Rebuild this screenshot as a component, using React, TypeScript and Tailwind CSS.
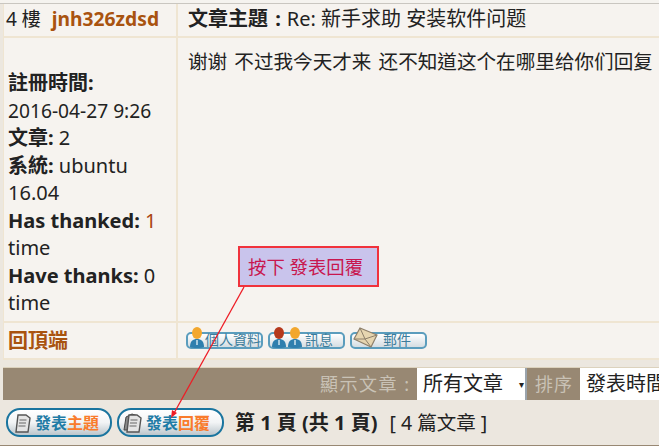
const font = { fontFamily: '"Noto Sans", "Noto Sans CJK TC", "Noto Sans CJK SC", sans-serif' };

function Person({ head, body }: { head: string; body: string }) {
  return (
    <svg width="16" height="21" viewBox="0 0 16 21" className="shrink-0">
      <ellipse cx="8" cy="6" rx="5" ry="6" fill={head} />
      <path d="M1 20c0-6 3-8 7-8s7 2 7 8c-2 .7-4 1-7 1s-5-.3-7-1z" fill={body} />
      <path d="M8 13v5" stroke="#cfe3ee" strokeWidth="1.5" />
    </svg>
  );
}

function Envelope() {
  return (
    <svg width="25" height="21" viewBox="0 0 25 21" className="shrink-0">
      <path d="M7 1 24 8 18 20 1 12z" fill="#e6d5b0" stroke="#8d7f6a" strokeWidth="1.2" />
      <path d="M7 1 12 12 24 8M1 12l11 0M18 20l-6-8" fill="none" stroke="#8d7f6a" strokeWidth="1" />
    </svg>
  );
}

function SmallButton({ icon, label, labelLeft }: { icon: React.ReactNode; label: string; labelLeft: string }) {
  return (
    <div className="relative h-[17px] w-[77px] rounded-[5px] border-2 border-[#5b9dbd] bg-gradient-to-b from-white to-[#d5dde2]">
      <div className="absolute bottom-[-1px] left-[1px] flex items-end">{icon}</div>
      <span className={`absolute top-[-3px] whitespace-nowrap text-[14px] leading-[17px] text-[#3d7d9c] ${labelLeft}`}>
        {label}
      </span>
    </div>
  );
}

function PostIcon({ double }: { double?: boolean }) {
  return (
    <svg width="20" height="22" viewBox="0 0 20 22" className="shrink-0">
      {double && <path d="M3 5 9 2l6 2-3 14H1z" fill="#8a8a8a" stroke="#444" strokeWidth="1" />}
      <path d="M6 3h8l4 3-2 14H4z" fill="#e4e4e4" stroke="#555" strokeWidth="1.4" />
      <path d="M7.5 8h7M7 11h7M6.5 14h7" stroke="#666" strokeWidth="1.2" />
    </svg>
  );
}

function ReplyButton({ first, second, double, width }: { first: string; second: string; double?: boolean; width: string }) {
  return (
    <div
      className={`flex h-[29px] items-center rounded-[14px] border-2 border-[#1a759f] bg-gradient-to-b from-white via-[#f2f4f5] to-[#bcc6cc] pl-[4px] ${width}`}
    >
      <PostIcon double={double} />
      <span className="ml-[3px] text-[16px] leading-none font-bold text-[#1f7ca6]">{first}</span>
      <span className="text-[16px] leading-none font-bold text-[#f97b2b]">{second}</span>
    </div>
  );
}

export default function App() {
  return (
    <div className="relative h-[446px] w-[659px] overflow-hidden bg-[#ece7df] text-[20px] text-[#222]" style={font}>
      <div className="h-[3px] bg-[#f5f3ef]" />
      <div className="h-px bg-[#c9c6c0]" />

      {/* post table */}
      <div className="ml-[3px] border-l border-[#efe5d2] bg-[#f6f3ef]">
        <div className="flex h-[34px] border-b-2 border-[#efe5d2]">
          <div className="flex w-[174px] shrink-0 items-center border-r-2 border-[#efe5d2] pb-[2px] pl-[2px] leading-none">
            <span className="whitespace-nowrap text-[19px]">4 樓</span>
            <span className="ml-[11px] text-[19.25px] font-bold text-[#a9530f]">jnh326zdsd</span>
          </div>
          <div className="flex items-center whitespace-nowrap pb-[2px] pl-[10px] leading-none">
            <b className="[word-spacing:2px]">文章主題 :</b>
            <span className="ml-[6px]">Re: 新手求助 安装软件问题</span>
          </div>
        </div>

        <div className="flex h-[285px] border-b-2 border-[#efe5d2]">
          <div className="w-[174px] shrink-0 border-r-2 border-[#efe5d2] pt-[31px] pl-[4px] leading-[27.5px]">
            <div>
              <b>註冊時間:</b>
            </div>
            <div className="whitespace-nowrap text-[19.2px]">2016-04-27 9:26</div>
            <div>
              <b>文章:</b> 2
            </div>
            <div>
              <b>系統:</b> ubuntu
            </div>
            <div>16.04</div>
            <div>
              <b>Has thanked:</b> <span className="text-[#a9430f]">1</span>
            </div>
            <div>time</div>
            <div>
              <b>Have thanks:</b> 0
            </div>
            <div>time</div>
          </div>
          <div className="whitespace-nowrap pt-[10px] pl-[10px] text-[19.6px] leading-[27px] [word-spacing:2px]">谢谢 不过我今天才来 还不知道这个在哪里给你们回复</div>
        </div>

        <div className="flex h-[37px] border-b-2 border-[#efe5d2]">
          <div className="flex w-[174px] shrink-0 items-center border-r-2 border-[#efe5d2] pl-[4px] font-bold text-[#a9530f]">
            回頂端
          </div>
          <div className="flex items-center gap-[5px] pl-[8px]">
            <SmallButton labelLeft="left-[17px]" label="個人資料" icon={<Person head="#f2a72e" body="#2f7fae" />} />
            <SmallButton
              labelLeft="left-[35px]"
              label="訊息"
              icon={
                <>
                  <Person head="#b5391c" body="#2f7fae" />
                  <Person head="#f2a72e" body="#2f7fae" />
                </>
              }
            />
            <SmallButton labelLeft="left-[31px]" label="郵件" icon={<Envelope />} />
          </div>
        </div>
      </div>

      {/* sort bar */}
      <div className="mt-[7px] ml-[3px] h-[33px] border-t border-[#dcd2bd] bg-[#988873] pl-[317px]">
        <div className="flex h-full items-center whitespace-nowrap text-[#c9c2b6]">
          <span className="w-[97px] shrink-0 text-[18px] tracking-[1.5px]">顯示文章 :</span>
          <div className="relative flex h-full w-[110px] shrink-0 items-center bg-white pl-[6px] text-[#222]">
            所有文章
            <span className="absolute right-[3px] text-[10px] leading-none">▾</span>
            <span className="absolute top-0 right-0 h-full w-[2px] bg-[#9aa4ad]" />
          </div>
          <span className="ml-[8px] w-[45px] shrink-0 text-[18px] tracking-[1px]">排序</span>
          <div className="flex h-full flex-1 items-center overflow-hidden bg-white pl-[6px] text-[#222]">發表時間</div>
        </div>
      </div>

      {/* pagination row */}
      <div className="flex h-[45px] items-center pl-[6px]">
        <ReplyButton first="發表" second="主題" width="w-[106px]" />
        <div className="ml-[5px]">
          <ReplyButton first="發表" second="回覆" double width="w-[107px]" />
        </div>
        <b className="ml-[11px] whitespace-nowrap">第 1 頁 (共 1 頁)</b>
        <span className="ml-[12px] whitespace-nowrap text-[19.5px]">[ 4 篇文章 ]</span>
      </div>
      <div className="h-px bg-[#988873]" />

      {/* callout */}
      <div className="absolute top-[246px] left-[238px] flex h-[41px] w-[141px] items-center border-2 border-[#f0323c] bg-[#c9c4ec] pl-[8px] text-[18.4px] text-[#c8174f]">
        按下 發表回覆
      </div>
      <svg className="absolute top-0 left-0" width="659" height="446" viewBox="0 0 659 446">
        <path d="M244 287 173 415" stroke="#ee1c25" strokeWidth="1.3" fill="none" />
        <path d="M171 418l1-8 5 3z" fill="#ee1c25" />
      </svg>
    </div>
  );
}
